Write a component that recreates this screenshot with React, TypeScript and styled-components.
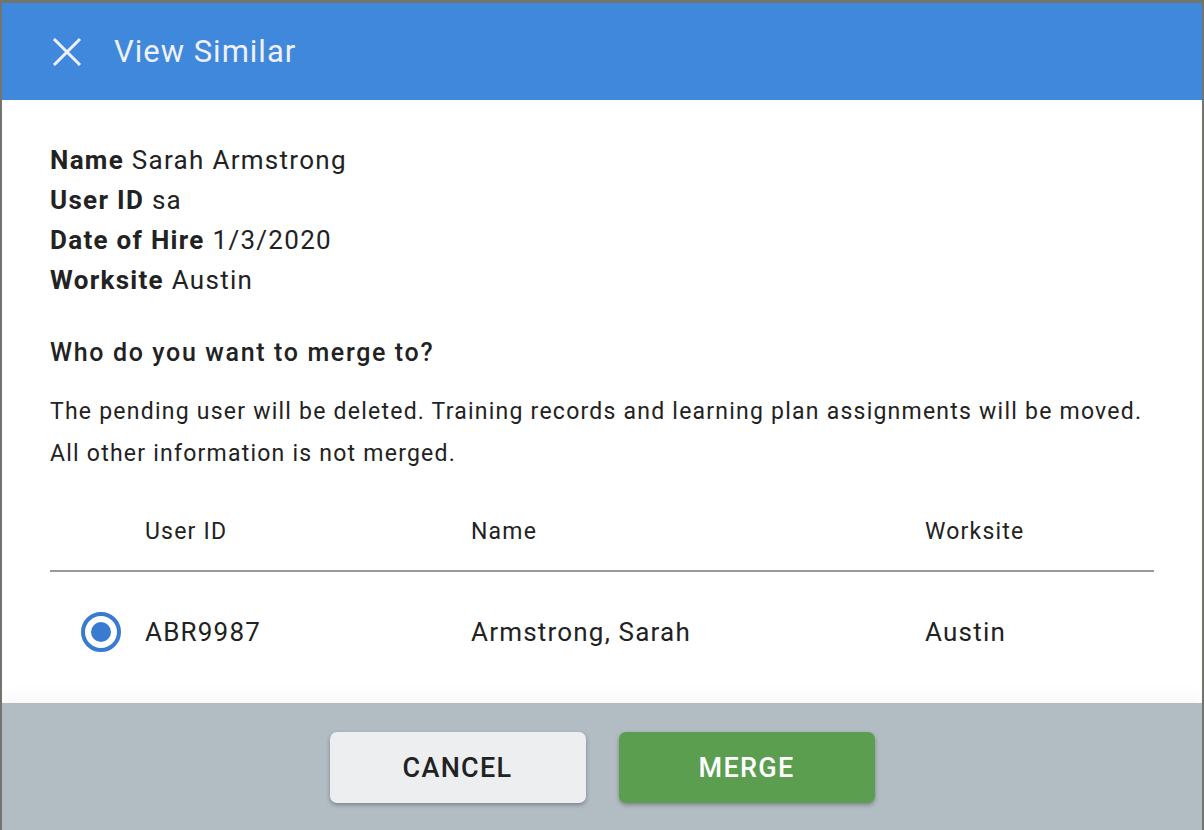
import React from "react";
import styled, { createGlobalStyle } from "styled-components";

const GlobalStyle = createGlobalStyle`
  html, body {
    margin: 0;
    padding: 0;
    background: #74746f;
    font-family: Roboto, "Noto Sans", sans-serif;
  }
`;

const Modal = styled.div`
  margin: 3px 2px 0;
  height: 827px;
  display: flex;
  flex-direction: column;
  background: #ffffff;
  overflow: hidden;
`;

const Header = styled.header`
  height: 97px;
  flex-shrink: 0;
  display: flex;
  align-items: center;
  gap: 32px;
  padding-left: 50px;
  background: #3f88dc;
  color: #eff1f6;
`;

const CloseButton = styled.button`
  display: flex;
  padding: 0;
  border: none;
  background: none;
  color: inherit;
  cursor: pointer;
`;

const Title = styled.h1`
  margin: 0;
  font-size: 31px;
  font-weight: 400;
  letter-spacing: 1px;
`;

const Body = styled.main`
  flex: 1;
  padding: 40px 48px 0;
  color: #222222;
`;

const Details = styled.div`
  font-size: 26px;
  line-height: 40px;
  letter-spacing: 1.3px;
`;

const Label = styled.strong`
  font-weight: 700;
  letter-spacing: 1.3px;
`;

const Question = styled.h2`
  margin: 37px 0 0;
  font-size: 25px;
  line-height: 32px;
  font-weight: 500;
  letter-spacing: 1.65px;
`;

const Note = styled.p`
  margin: 22px 0 0;
  font-size: 23px;
  line-height: 42px;
  letter-spacing: 1.23px;
`;

const Table = styled.div`
  display: grid;
  grid-template-columns: 95px 326px 454px 1fr;
  margin-top: 42px;
`;

const HeadCell = styled.div`
  font-size: 23px;
  line-height: 30px;
  letter-spacing: 1.2px;
  padding-bottom: 23px;
  border-bottom: 2px solid #9a9a9a;
`;

const Cell = styled.div`
  display: flex;
  align-items: center;
  height: 120px;
  font-size: 26px;
  letter-spacing: 1.2px;
`;

const Radio = styled.span`
  box-sizing: border-box;
  width: 40px;
  height: 40px;
  margin-left: 31px;
  border: 4px solid #3a7bd2;
  border-radius: 50%;
  display: flex;
  align-items: center;
  justify-content: center;

  &::after {
    content: "";
    width: 20px;
    height: 20px;
    border-radius: 50%;
    background: #3a7bd2;
  }
`;

const Footer = styled.footer`
  height: 127px;
  flex-shrink: 0;
  display: flex;
  justify-content: center;
  align-items: flex-start;
  gap: 33px;
  padding-top: 29px;
  box-sizing: border-box;
  background: #b2bcc3;
  box-shadow: 0 -8px 16px rgba(0, 0, 0, 0.03);
`;

const Button = styled.button<{ $primary?: boolean }>`
  width: 256px;
  height: 71px;
  border: none;
  border-radius: 7px;
  font-family: Roboto, "Noto Sans", sans-serif;
  font-size: 27px;
  font-weight: 500;
  letter-spacing: 1.3px;
  background: ${(p) => (p.$primary ? "#5c9e50" : "#edeef0")};
  color: ${(p) => (p.$primary ? "#ffffff" : "#222222")};
  box-shadow: 0 2px 4px rgba(0, 0, 0, 0.3);
  cursor: pointer;
`;

const details = [
  ["Name", "Sarah Armstrong"],
  ["User ID", "sa"],
  ["Date of Hire", "1/3/2020"],
  ["Worksite", "Austin"],
];

export default function App() {
  return (
    <>
      <GlobalStyle />
      <Modal>
        <Header>
          <CloseButton aria-label="Close">
            <svg width="30" height="30" viewBox="0 0 30 30">
              <path
                d="M2 2 L28 28 M28 2 L2 28"
                stroke="currentColor"
                strokeWidth="3"
              />
            </svg>
          </CloseButton>
          <Title>View Similar</Title>
        </Header>
        <Body>
          <Details>
            {details.map(([k, v]) => (
              <div key={k}>
                <Label>{k}</Label> {v}
              </div>
            ))}
          </Details>
          <Question>Who do you want to merge to?</Question>
          <Note>
            The pending user will be deleted. Training records and learning plan
            assignments will be moved.
            <br />
            All other information is not merged.
          </Note>
          <Table>
            <HeadCell />
            <HeadCell>User ID</HeadCell>
            <HeadCell>Name</HeadCell>
            <HeadCell>Worksite</HeadCell>
            <Cell>
              <Radio />
            </Cell>
            <Cell>ABR9987</Cell>
            <Cell>Armstrong, Sarah</Cell>
            <Cell>Austin</Cell>
          </Table>
        </Body>
        <Footer>
          <Button>CANCEL</Button>
          <Button $primary>MERGE</Button>
        </Footer>
      </Modal>
    </>
  );
}
